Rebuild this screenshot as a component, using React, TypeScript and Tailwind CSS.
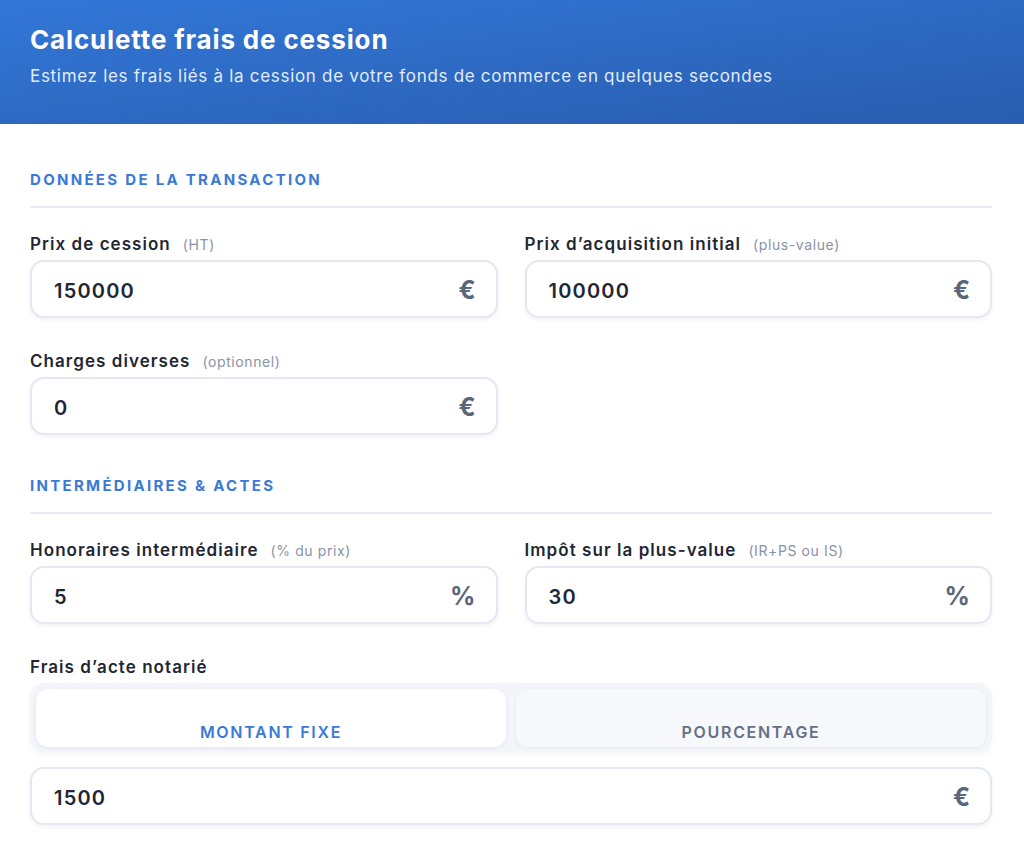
import React from "react";

function Field({ label, hint, value, unit }: { label: string; hint?: string; value: string; unit: string }) {
  return (
    <div className="flex flex-col">
      <div className="flex items-baseline h-[24px]">
        <span className="text-[17px] font-semibold tracking-[1.05px] text-[#1f2733]">{label}</span>
        {hint && <span className="ml-[12px] text-[14px] tracking-[0.6px] text-[#8a93a5]">{hint}</span>}
      </div>
      <div className="mt-[4px] h-[58px] rounded-[14px] border-2 border-[#e3e8f2] bg-white shadow-[0_2px_4px_rgba(30,41,59,0.06)] flex items-center pl-[22px] pr-[20px] pt-[3px]">
        <span className="flex-1 text-[20px] font-semibold tracking-[1.2px] text-[#1f2733]">{value}</span>
        <span className="text-[25px] font-bold text-[#5c667a]">{unit}</span>
      </div>
    </div>
  );
}

function SectionTitle({ children }: { children: React.ReactNode }) {
  return (
    <div className="border-b-2 border-[#e8ecf3] pb-[16px]">
      <div className="h-[20px] leading-[20px] text-[15px] font-bold tracking-[2.3px] text-[#3a7ad6]">{children}</div>
    </div>
  );
}

export default function App() {
  return (
    <div className="w-[1024px] min-h-[860px] bg-white" style={{ fontFamily: "Inter, 'Noto Sans', sans-serif" }}>
      <div className="h-[124px] bg-gradient-to-br from-[#3277d8] to-[#295dae] px-[30px] pt-[22px]">
        <h1 className="text-[26px] leading-[36px] font-bold tracking-[0.85px] text-white">Calculette frais de cession</h1>
        <p className="mt-[6px] text-[17px] leading-[24px] tracking-[0.7px] text-[#e3ecfa]">
          Estimez les frais liés à la cession de votre fonds de commerce en quelques secondes
        </p>
      </div>
      <div className="px-[30px] pr-[32px] pt-[46px]">
        <SectionTitle>DONNÉES DE LA TRANSACTION</SectionTitle>
        <div className="mt-[24px] grid grid-cols-2 gap-x-[27px] gap-y-[31px]">
          <Field label="Prix de cession" hint="(HT)" value="150000" unit="€" />
          <Field label="Prix d’acquisition initial" hint="(plus-value)" value="100000" unit="€" />
          <Field label="Charges diverses" hint="(optionnel)" value="0" unit="€" />
        </div>
        <div className="mt-[41px]">
          <SectionTitle>INTERMÉDIAIRES &amp; ACTES</SectionTitle>
        </div>
        <div className="mt-[24px] grid grid-cols-2 gap-x-[27px]">
          <Field label="Honoraires intermédiaire" hint="(% du prix)" value="5" unit="%" />
          <Field label="Impôt sur la plus-value" hint="(IR+PS ou IS)" value="30" unit="%" />
        </div>
        <div className="mt-[31px] h-[24px] text-[17px] font-semibold tracking-[1.05px] text-[#1f2733]">Frais d’acte notarié</div>
        <div className="mt-[4px] rounded-[14px] bg-[#f3f5fa] p-[6px] flex gap-[10px] shadow-[0_2px_6px_rgba(30,41,59,0.04)]">
          <div className="flex-1 h-[58px] rounded-[12px] bg-white shadow-[0_1px_4px_rgba(30,41,59,0.08)] flex items-end justify-center pb-[5px]">
            <span className="text-[16px] leading-[20px] font-semibold tracking-[1.7px] text-[#3a7ad6]">MONTANT FIXE</span>
          </div>
          <div className="flex-1 h-[58px] rounded-[12px] bg-[#f6f8fc] shadow-[0_1px_4px_rgba(30,41,59,0.06)] flex items-end justify-center pb-[5px]">
            <span className="text-[16px] leading-[20px] font-semibold tracking-[1.7px] text-[#667085]">POURCENTAGE</span>
          </div>
        </div>
        <div className="mt-[14px] h-[58px] rounded-[14px] border-2 border-[#e3e8f2] bg-white shadow-[0_2px_4px_rgba(30,41,59,0.06)] flex items-center pl-[22px] pr-[20px] pt-[3px]">
          <span className="flex-1 text-[20px] font-semibold tracking-[1.2px] text-[#1f2733]">1500</span>
          <span className="text-[25px] font-bold text-[#5c667a]">€</span>
        </div>
      </div>
    </div>
  );
}
